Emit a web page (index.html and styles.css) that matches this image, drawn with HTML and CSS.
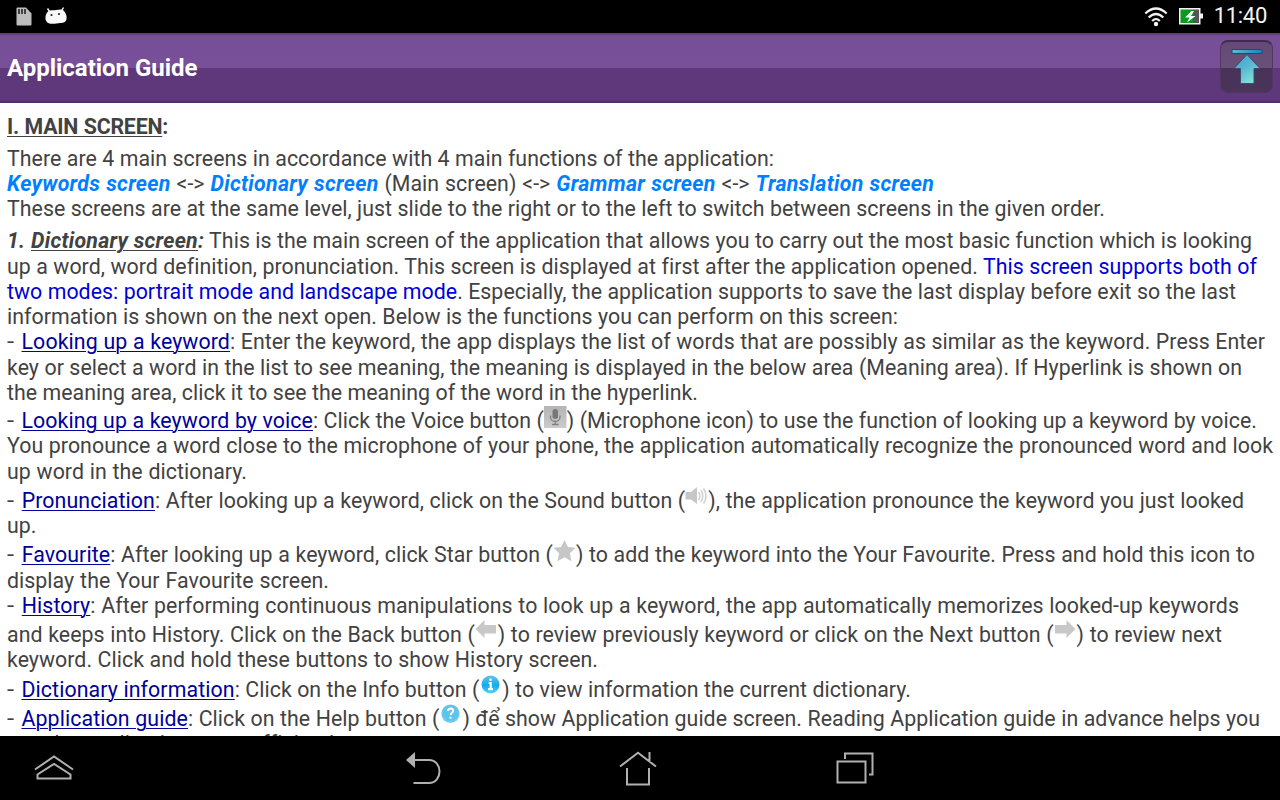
FILE: index.html
```html
<!DOCTYPE html>
<html lang="en">
<head>
<meta charset="utf-8">
<title>Application Guide</title>
<link rel="stylesheet" href="styles.css">
</head>
<body>
<div class="status">
  <div class="notices">
    <svg width="16" height="19" viewBox="0 0 16 19"><path d="M1.500.5H10l5.500 6v11q0 1-1 1h-13q-1 0-1-1v-16q0-1 1-1Z" fill="#bdbdbd"/><path d="M3 2v5M6 2v5M9 2v5" stroke="#222" stroke-width="1.600"/></svg>
    <svg width="22" height="18" viewBox="0 0 22 18"><path d="M2.500 1.500l2 3M18.500.5l-2 3.500" stroke="#f4f4f4" stroke-width="1.500"/><path d="M3 4.500C5 2.500 8 3.500 11 3c4-.7 6-1 8 1s3 5 2.500 8-3 4-6 4c-3 0-6 1-9 .8S.8 15 .5 12 1 6.500 3 4.500Z" fill="#f8f8f8"/><circle cx="6.500" cy="8" r="1" fill="#111"/><circle cx="14" cy="7" r="1" fill="#111"/></svg>
  </div>
  <div class="system">
    <svg class="wifi" width="24" height="20" viewBox="0 0 24 20"><g fill="none" stroke="#f2f2f2" stroke-width="2.200"><path d="M1.300 6.500Q12-3.500 22.700 6.500M4.700 10.500Q12 3.500 19.300 10.500M8.200 14Q12 10 15.800 14"/></g><circle cx="12" cy="17" r="2.200" fill="#f2f2f2"/></svg>
    <svg class="battery" width="25" height="17" viewBox="0 0 25 17"><path d="M0 0h21.500v5.500H24v5h-2.500V16.500H0Z" fill="#f2f2f2"/><path d="M1.500 1.500H14v13.500H1.500Z" fill="#0a9a1e"/><path d="M14 1.500h6v13.500h-6Z" fill="#555"/><path d="M12.500 3L6 9.500h4.500L8 14.500 16.500 8H12l3-5Z" fill="#fff"/></svg>
    <span class="clock">11:40</span>
  </div>
</div>
<header class="titlebar">
  <h1>Application Guide</h1>
  <button class="top" aria-label="Top"><svg width="32" height="36" viewBox="0 0 32 36"><defs><linearGradient id="up" x1="0" y1="0" x2=".6" y2="1"><stop offset="0" stop-color="#45a3cc"/><stop offset=".5" stop-color="#55b6d0"/><stop offset="1" stop-color="#82e0da"/></linearGradient><linearGradient id="bar"><stop offset="0" stop-color="#5dbbd7"/><stop offset="1" stop-color="#1687b8"/></linearGradient></defs><path d="M1 1.500h30v4H1Z" fill="url(#bar)" stroke="#2d4565"/><path d="M16 6.500L29 20.500h-6V35.500H9.500V20.500H3Z" fill="url(#up)" stroke="#3f4c70"/></svg></button>
</header>
<main class="guide">
  <div class="line l1"><b><u>I. MAIN SCREEN</u>:</b></div>
  <div class="line para l2">There are 4 main screens in accordance with 4 main functions of the application:</div>
  <div class="line l3"><b class="screen">Keywords screen</b> &lt;-&gt; <b class="screen">Dictionary screen</b> (Main screen) &lt;-&gt; <b class="screen">Grammar screen</b> &lt;-&gt; <b class="screen">Translation screen</b></div>
  <div class="line l4">These screens are at the same level, just slide to the right or to the left to switch between screens in the given order.</div>
  <div class="line para l5"><b class="lead"><i>1. <u>Dictionary screen</u>:</i></b> This is the main screen of the application that allows you to carry out the most basic function which is looking</div>
  <div class="line gap1 l6">up a word, word definition, pronunciation. This screen is displayed at first after the application opened. <span class="note">This screen supports both of</span></div>
  <div class="line l7"><span class="note">two modes: portrait mode and landscape mode</span>. Especially, the application supports to save the last display before exit so the last</div>
  <div class="line l8">information is shown on the next open. Below is the functions you can perform on this screen:</div>
  <div class="line l9"><span class="dash">-</span> <u class="term">Looking up a keyword</u>: Enter the keyword, the app displays the list of words that are possibly as similar as the keyword. Press Enter</div>
  <div class="line gap1 l10">key or select a word in the list to see meaning, the meaning is displayed in the below area (Meaning area). If Hyperlink is shown on</div>
  <div class="line l11">the meaning area, click it to see the meaning of the word in the hyperlink.</div>
  <div class="line gap3 l12"><span class="dash">-</span> <u class="term">Looking up a keyword by voice</u>: Click the Voice button (<svg class="ic" width="23" height="23" viewBox="0 0 23 23"><defs><linearGradient id="mic" x2="0" y2="1"><stop stop-color="#b4b4b4"/><stop offset="1" stop-color="#cbcbcb"/></linearGradient></defs><path d="M0 0h22.500v22H0Z" fill="url(#mic)"/><rect x="8.500" y="3" width="5.500" height="10" rx="2.700" fill="#777"/><path d="M6.500 9.500v1.500c0 6 9.500 6 9.500 0V9.500M11.300 15.500v3M8 18.500h6.500" fill="none" stroke="#808080" stroke-width="1.300"/></svg>) (Microphone icon) to use the function of looking up a keyword by voice.</div>
  <div class="line l13">You pronounce a word close to the microphone of your phone, the application automatically recognize the pronounced word and look</div>
  <div class="line gap1 l14">up word in the dictionary.</div>
  <div class="line gap4 l15"><span class="dash">-</span> <u class="term">Pronunciation</u>: After looking up a keyword, click on the Sound button (<svg class="ic" width="23" height="23" viewBox="0 0 23 23"><path d="M.5 6H6l6-5v17l-6-4.500H.5Z" fill="#c6c6c6"/><path d="M13.500 6q2.500 4 0 8M16 4q3.500 6 0 12M18.500 2.500q5 7.500 0 15" fill="none" stroke="#cfcfcf" stroke-width="1.500"/></svg>), the application pronounce the keyword you just looked</div>
  <div class="line l16">up.</div>
  <div class="line gap4 l17"><span class="dash">-</span> <u class="term">Favourite</u>: After looking up a keyword, click Star button (<svg class="ic" width="23" height="23" viewBox="0 0 23 23"><path d="M11.500 0l3.500 7 7.500.8-5.600 5.400 1.600 8-7-3.900-7 3.900 1.600-8L.5 7.800 8 7Z" fill="#c6c6c6"/></svg>) to add the keyword into the Your Favourite. Press and hold this icon to</div>
  <div class="line gap1 l18">display the Your Favourite screen.</div>
  <div class="line l19"><span class="dash">-</span> <u class="term">History</u>: After performing continuous manipulations to look up a keyword, the app automatically memorizes looked-up keywords</div>
  <div class="line gap4 l20">and keeps into History. Click on the Back button (<svg class="ic" width="23" height="23" viewBox="0 0 23 23"><path d="M.5 9L9.500 0v5H21v8.500H9.500V18Z" fill="#c8c8c8"/></svg>) to review previously keyword or click on the Next button (<svg class="ic" width="23" height="23" viewBox="0 0 23 23"><path d="M21.500 9L12.500 0v5H1v8.500h11.500V18Z" fill="#c8c8c8"/></svg>) to review next</div>
  <div class="line l21">keyword. Click and hold these buttons to show History screen.</div>
  <div class="line gap5 l22"><span class="dash">-</span> <u class="term">Dictionary information</u>: Click on the Info button (<svg class="ic" width="23" height="23" viewBox="0 0 23 23"><defs><linearGradient id="info" x2="0" y2="1"><stop stop-color="#5bc4ef"/><stop offset=".55" stop-color="#19a9e6"/><stop offset="1" stop-color="#4bd3fa"/></linearGradient></defs><circle cx="11.500" cy="9.500" r="9" fill="url(#info)"/><path d="M11.500 3.500v2.500M9.700 8h2v6M9 14.200h5" stroke="#fff" stroke-width="2.200" fill="none"/></svg>) to view information the current dictionary.</div>
  <div class="line gap4 l23"><span class="dash">-</span> <u class="term">Application guide</u>: Click on the Help button (<svg class="ic" width="23" height="23" viewBox="0 0 23 23"><circle cx="11.500" cy="9.700" r="9.200" fill="#6fcdef"/><circle cx="11.500" cy="9" r="8" fill="#5ec4ea"/><path d="M8.800 7q.3-2.500 2.900-2.500 2.700.2 2.500 2.500c-.2 1.700-2.500 1.800-2.600 4M11.500 12.800v2" stroke="#fff" stroke-width="2" fill="none"/></svg>) để show Application guide screen. Reading Application guide in advance helps you</div>
  <div class="line l24">use the application more efficiently.</div>
</main>
<nav class="navbar">
  <svg width="40" height="26" viewBox="0 0 40 26"><g fill="none" stroke="#b0b0b0" stroke-width="2"><path d="M1 14.500L20 1.500l19 13"/><path d="M3.500 23.500v-4L20 9l16.500 10.500v4Z"/></g></svg>
  <svg width="36" height="33" viewBox="0 0 36 33"><path d="M9 8h14c14 0 14 23 0 23H7.500" fill="none" stroke="#b0b0b0" stroke-width="2"/><path d="M0 8L9 0v16Z" fill="#b0b0b0"/></svg>
  <svg width="38" height="35" viewBox="0 0 38 35"><path d="M1 15.500L19 1.800l18 13.700M30.500 1v10M8 17v16.500h22V17" fill="none" stroke="#b0b0b0" stroke-width="2"/></svg>
  <svg width="38" height="32" viewBox="0 0 38 32"><path d="M1.500 9.500h28v21h-28ZM9 7V1.500h27.500v21H33" fill="none" stroke="#b0b0b0" stroke-width="2"/></svg>
</nav>
</body>
</html>
```
FILE: styles.css
```css
* { box-sizing: border-box; }
body {
  margin: 0;
  width: 1280px;
  height: 800px;
  display: flex;
  flex-direction: column;
  overflow: hidden;
  background: #fff;
  color: #424242;
  font-family: Roboto, "Liberation Sans", sans-serif;
}
svg { display: block; flex: none; }
.status {
  height: 33px;
  flex: none;
  display: flex;
  justify-content: space-between;
  padding: 0 13px 0 16px;
  background: #000;
}
.notices { display: flex; gap: 13px; padding-top: 7px; }
.system { display: flex; align-items: flex-start; color: #f4f4f4; }
.wifi { margin: 7px 11px 0 0; }
.battery { margin: 8px 10px 0 0; }
.clock { font-size: 22px; line-height: 32px; letter-spacing: -.3px; }
.titlebar {
  height: 70px;
  flex: none;
  display: flex;
  align-items: center;
  justify-content: space-between;
  padding: 0 7px;
  background: linear-gradient(#573673 0, #75508f 3px, #774f98 6px, #784f98 35px, #5f387c 35px, #5f387c 67px, #4b2b64 70px);
}
h1 { margin: 0; color: #fff; font-size: 24px; font-weight: 700; letter-spacing: -.02px; }
.top {
  display: flex;
  align-items: flex-start;
  justify-content: center;
  width: 53px;
  height: 53px;
  margin-top: -3px;
  padding: 6px 0 0;
  border: 1px solid #503762;
  border-top: 2px solid #402a50;
  border-radius: 8px;
  background: linear-gradient(#644977 0, #685177 26px, #483258 26px, #4a345a 100%);
}
.guide { flex: 1; min-height: 0; overflow: hidden; padding: 11px 0 0 7px; }
.line {
  height: 25px;
  line-height: 25px;
  font-size: 21.33px;
  letter-spacing: .04px;
  text-align-last: justify;
}
.para { margin-top: 7px; }
.gap1 { margin-top: 1px; }
.gap3 { margin-top: 3px; }
.gap4 { margin-top: 4px; }
.gap5 { margin-top: 5px; }
.line u { text-decoration-thickness: 1px; text-underline-offset: 2px; }
.dash { display: inline-block; width: 9px; transform: scaleX(1.2); transform-origin: left; text-align-last: left; }
.screen { color: #0080ff; font-style: italic; letter-spacing: .28px; }
.lead { letter-spacing: .25px; }
.note { color: #0000d8; }
.term { color: #00009c; letter-spacing: .1px; }
.ic { display: inline-block; vertical-align: -1px; margin: -6px 0 0; }

/* Measured widths of the text lines */
.l1 { width: 161px; letter-spacing: -.23px; }
.l2 { width: 767px; }
.l3 { width: 927px; }
.l4 { width: 1098px; }
.l5 { width: 1245px; }
.l6 { width: 1250px; }
.l7 { width: 1229px; }
.l8 { width: 891px; }
.l9 { width: 1258px; }
.l10 { width: 1235px; }
.l11 { width: 691px; }
.l12 { width: 1250px; }
.l13 { width: 1266px; }
.l14 { width: 240px; }
.l15 { width: 1237px; }
.l16 { width: 29px; }
.l17 { width: 1248px; }
.l18 { width: 322px; }
.l19 { width: 1232px; }
.l20 { width: 1215px; }
.l21 { width: 591px; }
.l22 { width: 904px; }
.l23 { width: 1253px; }
.l24 { width: 342px; }

.navbar {
  height: 64px;
  flex: none;
  display: flex;
  align-items: center;
  background: #000;
  padding-left: 34px;
}
.navbar svg:nth-child(2) { margin-left: 332px; }
.navbar svg:nth-child(3) { margin-left: 177px; }
.navbar svg:nth-child(4) { margin-left: 179px; }
```
